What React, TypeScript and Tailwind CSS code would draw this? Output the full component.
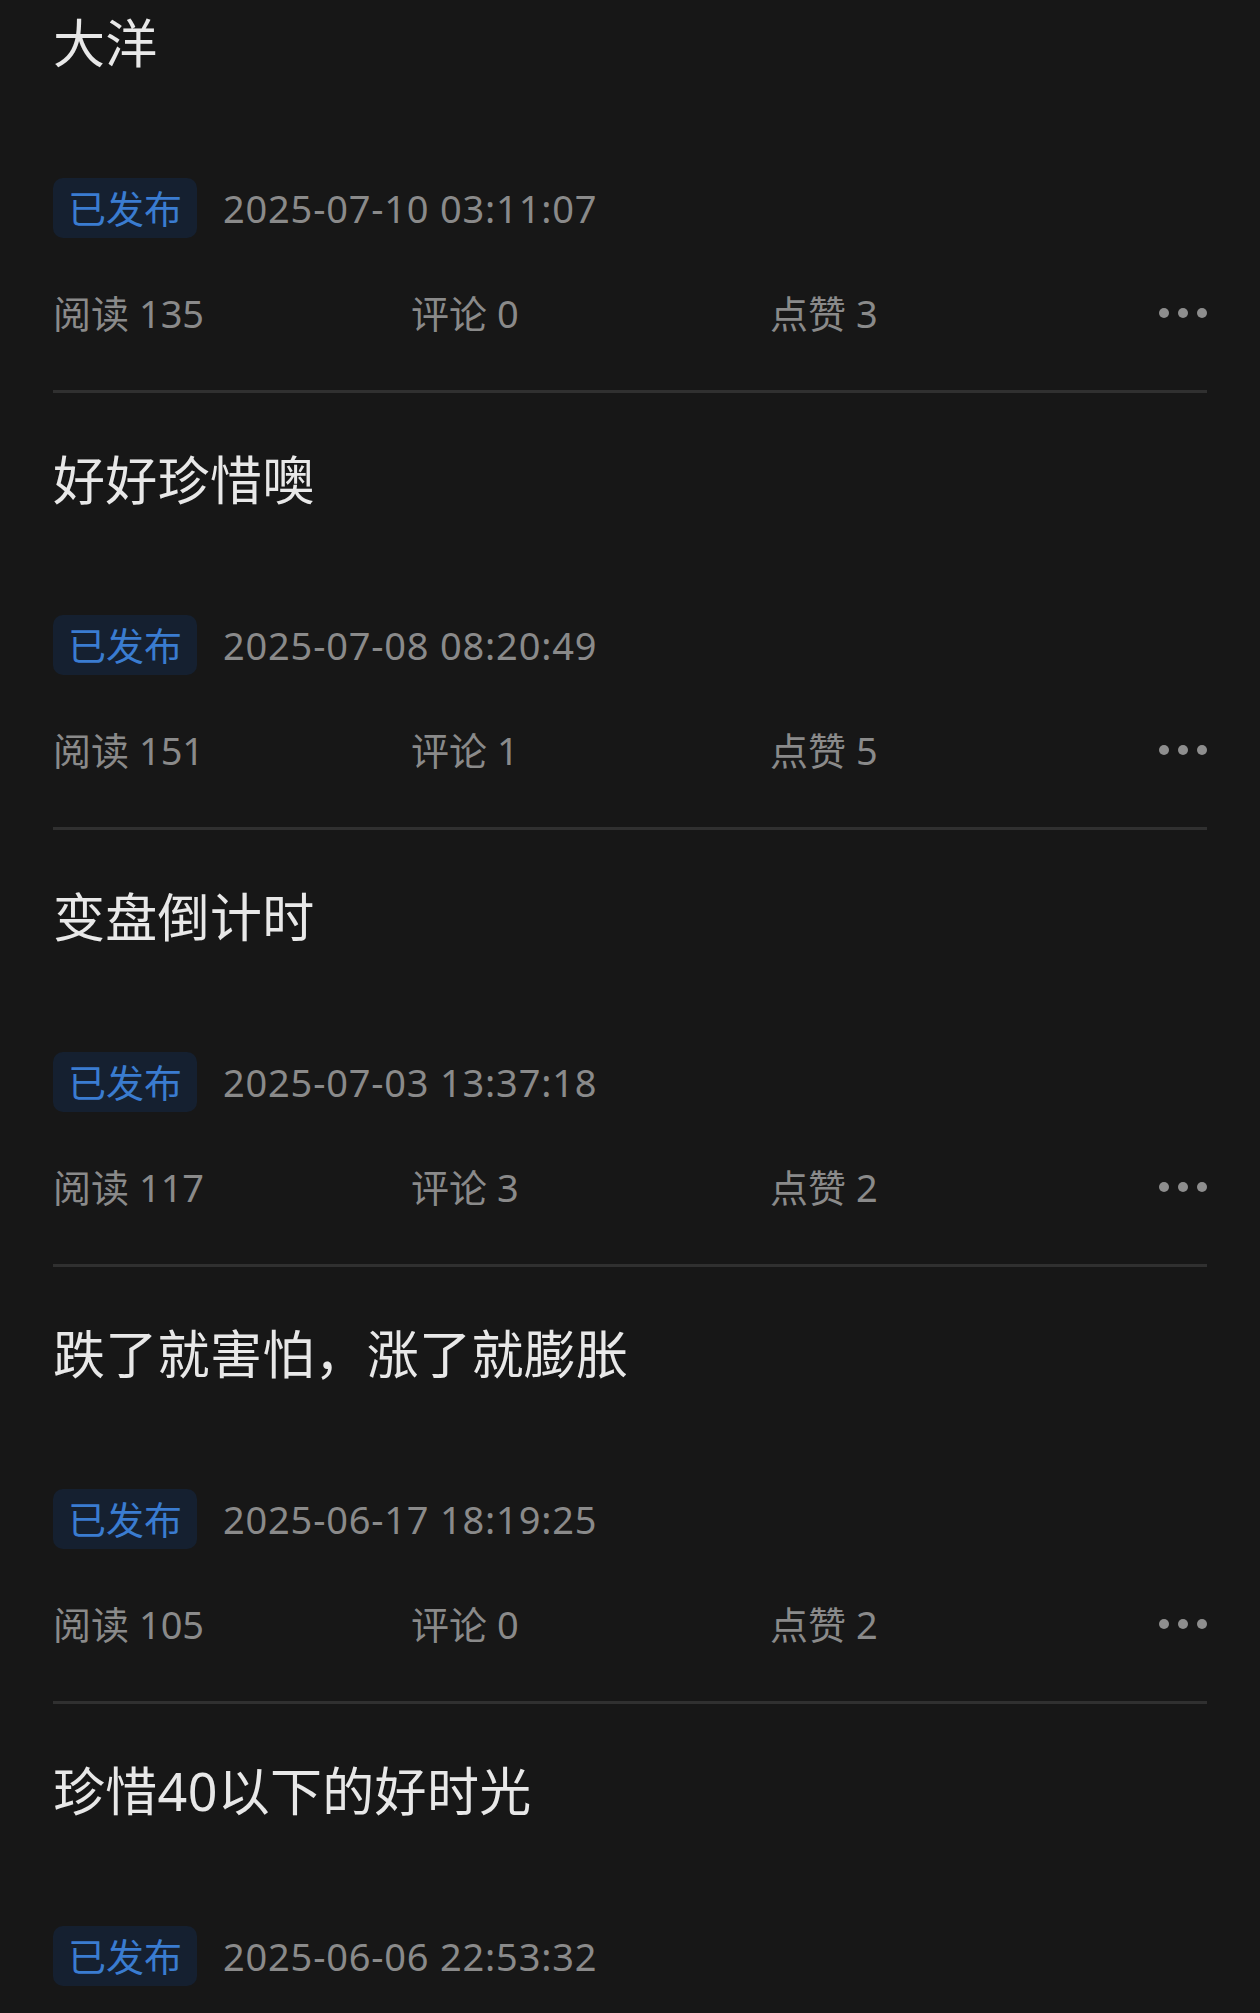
import React from "react";

interface Post {
  title: string;
  time: string;
  reads?: number;
  comments?: number;
  likes?: number;
}

const posts: Post[] = [
  { title: "大洋", time: "2025-07-10 03:11:07", reads: 135, comments: 0, likes: 3 },
  { title: "好好珍惜噢", time: "2025-07-08 08:20:49", reads: 151, comments: 1, likes: 5 },
  { title: "变盘倒计时", time: "2025-07-03 13:37:18", reads: 117, comments: 3, likes: 2 },
  { title: "跌了就害怕，涨了就膨胀", time: "2025-06-17 18:19:25", reads: 105, comments: 0, likes: 2 },
  { title: "珍惜40以下的好时光", time: "2025-06-06 22:53:32" },
];

const PostItem: React.FC<{ post: Post; first?: boolean }> = ({ post, first }) => {
  const hasStats = post.reads !== undefined;
  return (
    <div className={`border-b-[3px] border-[#303030] pt-[51px] pb-[51px] ${first ? "-mt-[44px]" : ""}`}>
      {/* Title */}
      <div className="text-[52px] leading-[72px] text-[#e8e8e8] tracking-[0.3px]">{post.title}</div>

      {/* Status + time */}
      <div className="mt-[99px] flex items-center h-[60px]">
        <span className="flex h-[60px] w-[144px] items-center justify-center rounded-[10px] bg-[#152030] text-[38px] text-[#3a7cd0]">
          已发布
        </span>
        <span className="ml-[26px] text-[38px] tracking-[0.8px] text-[#8a8a8a]">{post.time}</span>
      </div>

      {/* Stats */}
      {hasStats && (
        <div className="mt-[49px] flex items-center h-[52px] text-[38px] leading-[52px] text-[#8a8a8a]">
          <span className="w-[358px]">阅读 {post.reads}</span>
          <span className="w-[359px]">评论 {post.comments}</span>
          <span className="flex-1">点赞 {post.likes}</span>
          <span className="flex items-center gap-[9px]">
            <span className="h-[10px] w-[10px] rounded-full bg-[#8e8e8e]" />
            <span className="h-[10px] w-[10px] rounded-full bg-[#8e8e8e]" />
            <span className="h-[10px] w-[10px] rounded-full bg-[#8e8e8e]" />
          </span>
        </div>
      )}
    </div>
  );
};

export default function App() {
  return (
    <div
      className="h-[2013px] w-[1260px] overflow-hidden bg-[#171717] px-[53px]"
      style={{ fontFamily: '"Noto Sans", "Noto Sans CJK SC", sans-serif' }}
    >
      {posts.map((p, i) => (
        <PostItem key={i} post={p} first={i === 0} />
      ))}
    </div>
  );
}
